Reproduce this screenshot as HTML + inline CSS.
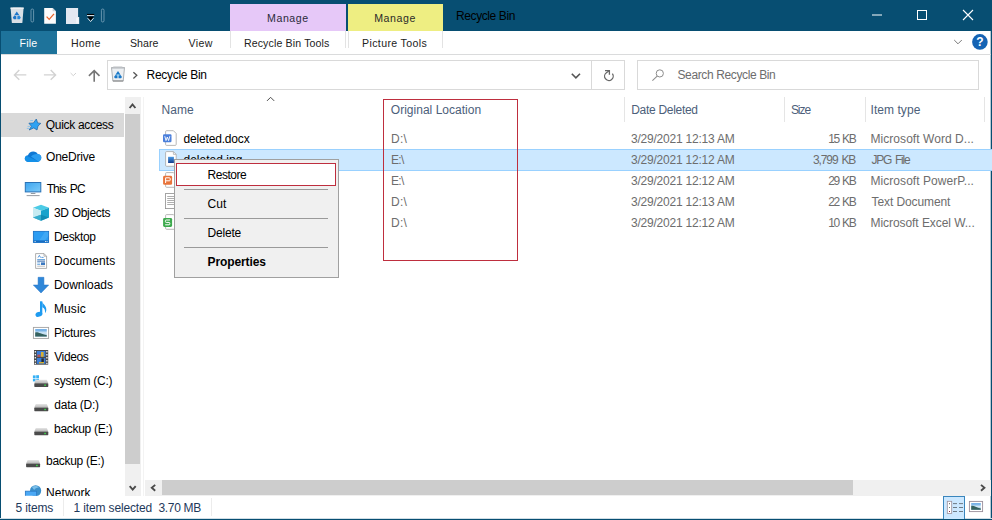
<!DOCTYPE html>
<html lang="en">
<head>
<meta charset="utf-8">
<title>Recycle Bin</title>
<style>
html,body{margin:0;padding:0;}
body{width:992px;height:520px;position:relative;overflow:hidden;background:#fff;font-family:"Liberation Sans",sans-serif;}
.a{position:absolute;}
.t{position:absolute;white-space:pre;line-height:20px;height:20px;}
svg{position:absolute;overflow:visible;}
</style>
</head>
<body>
<!-- title bar -->
<div class="a" style="left:0;top:0;width:992px;height:31px;background:#074e72;"></div>
<!-- window borders -->
<div class="a" style="left:0;top:0;width:1px;height:520px;background:#074e72;"></div>
<div class="a" style="left:990px;top:31px;width:1px;height:489px;background:#b5cad5;"></div>
<div class="a" style="left:991px;top:0;width:1px;height:520px;background:#074e72;"></div>
<div class="a" style="left:0;top:518px;width:992px;height:1px;background:#d0dde5;"></div>
<div class="a" style="left:0;top:519px;width:992px;height:1px;background:#074e72;"></div>
<!-- contextual tabs -->
<div class="a" style="left:230px;top:4px;width:116px;height:27px;background:#e6c8f8;"></div>
<div class="a" style="left:348px;top:4px;width:95px;height:27px;background:#eeee82;"></div>
<!-- file tab -->
<div class="a" style="left:1px;top:31px;width:56px;height:23px;background:#1e739b;"></div>
<!-- ribbon tab separators -->
<div class="a" style="left:230px;top:31px;width:1px;height:17px;background:#e3e3e3;"></div>
<div class="a" style="left:345px;top:31px;width:1px;height:17px;background:#e3e3e3;"></div>
<div class="a" style="left:348px;top:31px;width:1px;height:17px;background:#e3e3e3;"></div>
<div class="a" style="left:442px;top:31px;width:1px;height:17px;background:#e3e3e3;"></div>
<!-- ribbon bottom line -->
<div class="a" style="left:1px;top:54px;width:990px;height:1px;background:#dadbdc;"></div>
<!-- address box -->
<div class="a" style="left:107px;top:60px;width:516px;height:28px;border:1px solid #d9d9d9;box-sizing:content-box;"></div>
<div class="a" style="left:591px;top:61px;width:1px;height:28px;background:#d9d9d9;"></div>
<!-- search box -->
<div class="a" style="left:637px;top:60px;width:340px;height:28px;border:1px solid #d9d9d9;"></div>
<!-- nav pane -->
<div class="a" style="left:1px;top:113px;width:123px;height:24px;background:#d9d9d9;"></div>
<div class="a" style="left:125px;top:97px;width:16px;height:399px;background:#f0f0f0;"></div>
<div class="a" style="left:125px;top:114px;width:15px;height:350px;background:#cdcdcd;"></div>
<div class="a" style="left:143px;top:97px;width:1px;height:399px;background:#f3f3f3;"></div>
<!-- header dividers -->
<div class="a" style="left:624px;top:97px;width:1px;height:25px;background:#e5e5e5;"></div>
<div class="a" style="left:784px;top:97px;width:1px;height:25px;background:#e5e5e5;"></div>
<div class="a" style="left:865px;top:97px;width:1px;height:25px;background:#e5e5e5;"></div>
<div class="a" style="left:984px;top:97px;width:1px;height:25px;background:#e5e5e5;"></div>
<!-- selected row -->
<div class="a" style="left:159px;top:149px;width:832px;height:20px;background:#cce8ff;border-top:1px solid #99d1ff;border-bottom:1px solid #99d1ff;border-left:1px solid #99d1ff;"></div>
<!-- h scrollbar -->
<div class="a" style="left:145px;top:480px;width:846px;height:16px;background:#f0f0f0;"></div>
<div class="a" style="left:162px;top:480px;width:691px;height:15px;background:#cdcdcd;"></div>
<div class="a" style="left:63px;top:498px;width:1px;height:18px;background:#ececec;"></div>
<div class="a" style="left:211px;top:498px;width:1px;height:18px;background:#ececec;"></div>
<!-- status bar view buttons -->
<div class="a" style="left:943px;top:496px;width:20px;height:22px;background:#cce8ff;border:1px solid #3a86bd;border-bottom:none"></div>
<!-- red annotation -->
<div class="a" style="left:383px;top:99px;width:133px;height:160px;border:1px solid #be2e3e;"></div>
<svg width="992" height="520" viewBox="0 0 992 520" style="left:0;top:0">
<defs>
<linearGradient id="gsky" x1="0" y1="0" x2="0" y2="1"><stop offset="0" stop-color="#4a98e0"/><stop offset="0.5" stop-color="#d4e9f7"/><stop offset="1" stop-color="#8db4d2"/></linearGradient>
<linearGradient id="gjpg" x1="0" y1="0" x2="0" y2="1"><stop offset="0" stop-color="#4a9be6"/><stop offset="1" stop-color="#143c8c"/></linearGradient>
<linearGradient id="gdrv" x1="0" y1="0" x2="0" y2="1"><stop offset="0" stop-color="#e6e6e6"/><stop offset="1" stop-color="#b4b4b4"/></linearGradient>
<linearGradient id="gmon" x1="0" y1="0" x2="1" y2="1"><stop offset="0" stop-color="#3da5f0"/><stop offset="1" stop-color="#7ccaf8"/></linearGradient>
<g id="bin">
  <path d="M0.1,1.2 L13.1,1.2 L11.9,15.9 Q11.85,16.4 11.4,16.4 L1.8,16.4 Q1.35,16.4 1.3,15.9 Z" fill="#d9e0e6"/>
  <path d="M0,0.9 L13.2,0.9 L13.1,2.3 L0.1,2.3 Z" fill="#eceff2"/>
  <path d="M2.4,0.4 L10.8,0.4 L10.8,1 L2.4,1 Z" fill="#c9d3db" opacity="0.7"/>
  <path d="M6.3,4.9 L8.9,8.7 L3.7,8.7 Z" fill="#1c74c8"/>
  <path d="M2.3,11 L3.8,8.9 L5.8,9.6 L5.8,12.6 L3.3,12.6 Z" fill="#1c74c8"/>
  <path d="M10.3,11 L8.8,8.9 L6.8,9.6 L6.8,12.6 L9.3,12.6 Z" fill="#2a88d8"/>
</g>
<g id="bin2">
  <path d="M0.3,2 L13.3,2 L12,15.4 L1.7,15.4 Z" fill="#eceff2" stroke="#a4a8ad" stroke-width="0.9" stroke-linejoin="round"/>
  <path d="M0,1.6 L13.6,1.6 L13.5,3 L0.1,3 Z" fill="#b6b9bd"/>
  <path d="M2.2,0.6 L11,0.6 L11.4,1.6 L1.8,1.6 Z" fill="#d2d4d7"/>
  <path d="M1.6,15 L12.1,15 L12,15.9 L1.7,15.9 Z" fill="#858585"/>
  <path d="M6.8,5.4 L9.4,9.2 L4.2,9.2 Z" fill="#1a78c8"/>
  <path d="M2.8,11.4 L4.3,9.3 L6.3,10 L6.3,12.7 L3.8,12.7 Z" fill="#1a78c8"/>
  <path d="M10.8,11.4 L9.3,9.3 L7.3,10 L7.3,12.7 L9.8,12.7 Z" fill="#1a78c8"/>
  <circle cx="6.8" cy="9.6" r="1" fill="#8ccdf2"/>
</g>
<g id="drive">
  <path d="M1.5,0 L12.5,0 L14,3.6 L0,3.6 Z" fill="url(#gdrv)"/>
  <rect x="0" y="3.6" width="14" height="3.6" rx="0.6" fill="#4b4b4b"/>
  <rect x="10" y="4.8" width="1.6" height="1.4" fill="#3ddc4a"/>
</g>
</defs>

<!-- title bar: recycle bin -->
<use href="#bin" x="10.5" y="6.6"/>
<!-- separators -->
<rect x="31" y="9" width="2.6" height="13" rx="1.3" fill="none" stroke="#7ea6bd" stroke-width="0.8"/>
<rect x="101.4" y="9" width="2.6" height="13" rx="1.3" fill="none" stroke="#7ea6bd" stroke-width="0.8"/>
<!-- properties (page with check) -->
<path d="M44.2,8 L52.6,8 L55.9,11.3 L55.9,23.8 L44.2,23.8 Z" fill="#fbfbfb"/>
<path d="M52.6,8 L52.6,11.3 L55.9,11.3 Z" fill="#c9ced6"/>
<path d="M46.6,16.6 L49.2,19.4 L54,13.8" fill="none" stroke="#e8632a" stroke-width="1.25"/>
<!-- new folder (blank page) -->
<path d="M66,7.9 L78.1,7.9 L78.1,17 L79.2,17 L79.2,23.9 L66,23.9 Z" fill="#e3e8f1"/>
<path d="M76.2,17.6 L78.6,17.6 L78.6,23.4 L76.2,23.4 Z" fill="#f3f6fa"/>
<!-- customize dropdown -->
<rect x="87" y="13.9" width="7.2" height="1.2" fill="#000"/>
<rect x="87" y="15.1" width="7.2" height="1" fill="#e8eef2"/>
<path d="M87.2,16.6 L94,16.6 L90.6,20.4 Z" fill="#000"/>
<path d="M87.6,18.2 L90.6,21.6 L93.6,18.2" fill="none" stroke="#e8eef2" stroke-width="0.9"/>
<!-- window controls -->
<rect x="872" y="14.5" width="10" height="1" fill="#fff"/>
<rect x="917.5" y="10.5" width="9" height="9" fill="none" stroke="#fff" stroke-width="1"/>
<path d="M963,10 L973,20 M973,10 L963,20" stroke="#fff" stroke-width="1.1" fill="none"/>
<!-- ribbon collapse chevron + help -->
<path d="M954.2,40 L958,43.8 L961.8,40" fill="none" stroke="#7a7a7a" stroke-width="1"/>
<circle cx="979.9" cy="41.9" r="7.8" fill="#1463b4"/>
<text x="979.9" y="46.3" font-family="Liberation Sans, sans-serif" font-size="12" font-weight="700" fill="#fff" text-anchor="middle">?</text>

<!-- nav arrows -->
<path d="M26.3,74.9 L14.4,74.9 M19.3,70 L14.4,74.9 L19.3,79.8" fill="none" stroke="#d2d2d2" stroke-width="1.4"/>
<path d="M43.9,74.9 L55.6,74.9 M50.7,70 L55.6,74.9 L50.7,79.8" fill="none" stroke="#d2d2d2" stroke-width="1.4"/>
<path d="M70.6,73 L73.3,75.7 L76,73" fill="none" stroke="#d2d2d2" stroke-width="1"/>
<path d="M94.2,81.7 L94.2,70.6 M88.9,75.9 L94.2,70.6 L99.5,75.9" fill="none" stroke="#767676" stroke-width="1.6"/>
<!-- address recycle bin -->
<use href="#bin2" x="111.2" y="65.6"/>
<path d="M133.4,72.2 L136.8,75.3 L133.4,78.4" fill="none" stroke="#555" stroke-width="1.3"/>
<!-- address dropdown chevron -->
<path d="M571.8,73.8 L575.9,77.9 L580,73.8" fill="none" stroke="#555" stroke-width="1.6"/>
<!-- refresh -->
<path d="M612.4,73.7 A4.3,4.3 0 1 1 606.4,72.7 L608.8,71" fill="none" stroke="#666" stroke-width="1.3"/>
<path d="M605,70.7 L609.4,70.7 L609.4,74.8" fill="none" stroke="#666" stroke-width="1.3"/>
<!-- search magnifier -->
<circle cx="659.8" cy="73.4" r="3.6" fill="none" stroke="#8c8c8c" stroke-width="1"/>
<path d="M657.2,76.2 L652.4,80.6" stroke="#8c8c8c" stroke-width="1.1"/>

<!-- nav scrollbar arrows -->
<path d="M129.6,108 L132.5,104.5 L135.4,108" fill="none" stroke="#4a4a4a" stroke-width="1.9"/>
<path d="M129.7,486.2 L132.7,489.6 L135.7,486.2" fill="none" stroke="#4a4a4a" stroke-width="1.9"/>
<!-- h scrollbar arrows -->
<path d="M155.2,484.9 L151.8,487.8 L155.2,490.7" fill="none" stroke="#4a4a4a" stroke-width="1.9"/>
<path d="M981,484.9 L984.4,487.8 L981,490.7" fill="none" stroke="#4a4a4a" stroke-width="1.9"/>
<!-- sort arrow -->
<path d="M267,100.9 L270.6,97.3 L274.2,100.9" fill="none" stroke="#4a4a4a" stroke-width="1"/>

<!-- quick access star -->
<path d="M36.3,119 L37.7,122.9 L40.8,123.4 L38,126 L37,130 L33.8,127.9 L29.2,130 L31.4,126.2 L28.9,123.2 L33.4,123 Z" fill="#2ea2f2" stroke="#1c64a6" stroke-width="0.7" stroke-linejoin="round"/>
<path d="M30.2,120.6 L33,120.6 M27.6,126.4 L30,126.4 M26.8,128.4 L29,128.4" stroke="#5ab4f5" stroke-width="0.6"/>
<!-- onedrive cloud -->
<path d="M28.4,161.9 C25.6,161.9 24.8,159.6 24.8,158.6 C24.8,156.6 26.4,155.4 28,155.3 C28.6,153 30.8,151.5 33.2,151.5 C35.4,151.5 37,152.6 37.8,154.2 C39.8,154 41.3,155.6 41.3,157.6 C41.3,160 39.6,161.9 37.6,161.9 Z" fill="#0f78d4"/>
<path d="M28.4,161.9 C25.6,161.9 24.8,159.6 24.8,158.6 C24.8,157.2 25.6,156.2 26.6,155.7 L38.6,161.7 C38.2,161.9 37.9,161.9 37.6,161.9 Z" fill="#1490e8"/>
<path d="M31,156.6 C32.4,154.8 35.6,153.6 37.8,154.2 C39.8,154 41.3,155.6 41.3,157.6 C41.3,159.6 40.2,161.2 38.6,161.7 Z" fill="#2b9df0"/>
<!-- this pc -->
<rect x="25.3" y="182.5" width="15.5" height="9.4" fill="url(#gmon)" stroke="#2a72b6" stroke-width="1"/>
<rect x="30.8" y="193" width="4.6" height="0.9" fill="#8a9098"/>
<rect x="26.6" y="195.2" width="13" height="0.9" fill="#8a9098"/>
<!-- 3d objects -->
<path d="M41,204.8 L49,207.8 L41,210.8 L33,207.8 Z" fill="#4ccbe6"/>
<path d="M33,207.8 L41,210.8 L41,220.7 L33,217.6 Z" fill="#c6ebf2"/>
<path d="M49,207.8 L49,217.6 L41,220.7 L41,210.8 Z" fill="#19a3cc"/>
<path d="M33,217.6 L41,214.8 L49,217.6 L41,220.7 Z" fill="#0f86ae" opacity="0.8"/>
<path d="M33,217.6 L41,214.8 L41,220.7 Z" fill="#35b5d6" opacity="0.7"/>
<!-- desktop -->
<rect x="33.4" y="231.4" width="15.2" height="11" fill="#2b9cf2" stroke="#1b74c8" stroke-width="0.9"/>
<path d="M39,241 L45,231.8 L48.2,231.8 L48.2,236 L44.6,241 Z" fill="#49aef6" opacity="0.7"/>
<rect x="33.4" y="240.4" width="15.2" height="2" fill="#176cc0"/>
<rect x="34.6" y="241" width="1" height="0.9" fill="#fff"/><rect x="45" y="241" width="0.9" height="0.9" fill="#fff"/><rect x="46.6" y="241" width="0.9" height="0.9" fill="#fff"/>
<!-- documents -->
<path d="M35.6,253.6 L44,253.6 L46.6,256.2 L46.6,268.4 L35.6,268.4 Z" fill="#fff" stroke="#9b9b9b" stroke-width="0.8"/>
<path d="M44,253.6 L44,256.2 L46.6,256.2" fill="none" stroke="#9b9b9b" stroke-width="0.7"/>
<path d="M38,257.6 L39.4,255.4 L40.6,257.6 M41.4,257.4 L43.6,257.4" stroke="#2f7fd0" stroke-width="0.8" fill="none"/>
<rect x="37.2" y="259" width="7.8" height="0.8" fill="#4c94d8"/>
<rect x="37.2" y="260.6" width="7.8" height="1" fill="#2b62a8"/>
<rect x="37.2" y="262.6" width="3" height="0.7" fill="#4c94d8"/><rect x="37.2" y="264" width="3" height="0.7" fill="#4c94d8"/>
<rect x="41" y="262.4" width="4" height="2.6" fill="#3b78c0"/>
<rect x="37.2" y="265.8" width="7.8" height="0.7" fill="#a5a5a5"/>
<!-- downloads -->
<path d="M38.1,277.3 L43.9,277.3 L43.9,285 L48.7,285 L41,293 L33.3,285 L38.1,285 Z" fill="#2f87d8" stroke="#2272c6" stroke-width="0.5"/>
<!-- music -->
<ellipse cx="38.9" cy="314.3" rx="3.5" ry="2.4" fill="#1e9bf0" transform="rotate(-18 38.9 314.3)"/>
<path d="M40,301.3 L42.3,301.3 L42.3,314.3 L40,314.3 Z" fill="#1e9bf0"/>
<path d="M42.3,301.6 C42.8,304.6 46.4,305.6 46.3,309.4 C46.3,311 45.8,312.2 45,313 C45.4,310 44.4,308 42.3,307.2 Z" fill="#1e9bf0"/>
<!-- pictures -->
<rect x="33.4" y="327.4" width="15.2" height="11" fill="#fff" stroke="#a2a2a2" stroke-width="0.9"/>
<rect x="35.2" y="329.2" width="11.6" height="7.4" fill="url(#gsky)"/>
<path d="M35.2,332.6 C37.6,331.6 40.6,334 46.8,335.2 L46.8,336.6 L35.2,336.6 Z" fill="#35625f"/>
<!-- videos -->
<rect x="34" y="350" width="14.2" height="14.7" fill="#4a4a4a"/>
<rect x="36.8" y="351" width="8.6" height="5.8" fill="#3b7dd8"/>
<rect x="36.8" y="358" width="8.6" height="5.8" fill="#3b7dd8"/>
<rect x="41" y="352" width="2.6" height="4.8" fill="#d8b030"/><rect x="41.4" y="358.4" width="2.4" height="4" fill="#2a2a2a"/>
<rect x="37.4" y="354.6" width="3" height="2.2" fill="#c0504a"/><rect x="39" y="362" width="5" height="1.4" fill="#d8b030"/>
<g fill="#fff"><rect x="34.7" y="351" width="1.2" height="1.5"/><rect x="34.7" y="354" width="1.2" height="1.5"/><rect x="34.7" y="357" width="1.2" height="1.5"/><rect x="34.7" y="360" width="1.2" height="1.5"/><rect x="34.7" y="362.8" width="1.2" height="1.3"/>
<rect x="46.3" y="351" width="1.2" height="1.5"/><rect x="46.3" y="354" width="1.2" height="1.5"/><rect x="46.3" y="357" width="1.2" height="1.5"/><rect x="46.3" y="360" width="1.2" height="1.5"/><rect x="46.3" y="362.8" width="1.2" height="1.3"/></g>
<!-- system drive -->
<g fill="#35b0f5"><rect x="32.9" y="375.4" width="2.7" height="2.7"/><rect x="36.2" y="375.2" width="2.8" height="2.9"/><rect x="32.9" y="378.7" width="2.7" height="2.7"/><rect x="36.2" y="378.7" width="2.8" height="2.9"/></g>
<use href="#drive" x="34.3" y="379.7"/>
<use href="#drive" x="34.3" y="404"/>
<use href="#drive" x="34.3" y="428"/>
<use href="#drive" x="26.1" y="460"/>
<!-- network (clipped by status bar) -->
<clipPath id="cnav"><rect x="0" y="470" width="125" height="25.8"/></clipPath>
<g clip-path="url(#cnav)">
<circle cx="35.6" cy="490.8" r="5.6" fill="#3a8fcb"/>
<path d="M32,487 C34,485.6 37,485.6 39,487.4 C37,487.2 35,488.4 34.2,490 C33.4,489 32.4,488 32,487 Z" fill="#8ccaf0" opacity="0.8"/>
<rect x="25.4" y="491.2" width="11.2" height="6" fill="#4aa8f5" stroke="#2c7cc8" stroke-width="0.9"/>
</g>

<!-- file icons -->
<g id="pg1">
<path d="M166.6,130.7 L173.4,130.7 L176.2,133.5 L176.2,144.4 Q176.2,145.4 175.2,145.4 L166.6,145.4 Q165.6,145.4 165.6,144.4 L165.6,131.7 Q165.6,130.7 166.6,130.7 Z" fill="#fff" stroke="#a6a6a6" stroke-width="0.8"/>
</g>
<rect x="163" y="134.2" width="8.5" height="8.1" rx="1.2" fill="#4a7fdb"/>
<path d="M164.8,136.2 L166,140.6 L167.3,137 L168.6,140.6 L169.8,136.2" fill="none" stroke="#fff" stroke-width="0.9"/>
<!-- jpg -->
<path d="M166.6,151.6 L173.4,151.6 L176.2,154.4 L176.2,165.3 Q176.2,166.3 175.2,166.3 L166.6,166.3 Q165.6,166.3 165.6,165.3 L165.6,152.6 Q165.6,151.6 166.6,151.6 Z" fill="#fff" stroke="#a6a6a6" stroke-width="0.8"/>
<path d="M173.4,151.6 L173.4,154.4 L176.2,154.4" fill="none" stroke="#a6a6a6" stroke-width="0.7"/>
<rect x="168.1" y="156.8" width="5.8" height="6.2" fill="url(#gjpg)"/>
<!-- pptx -->
<path d="M166.6,172.6 L173.4,172.6 L176.2,175.4 L176.2,186.3 Q176.2,187.3 175.2,187.3 L166.6,187.3 Q165.6,187.3 165.6,186.3 L165.6,173.6 Q165.6,172.6 166.6,172.6 Z" fill="#fff" stroke="#a6a6a6" stroke-width="0.8"/>
<rect x="163.1" y="175.8" width="9" height="9" rx="1.4" fill="#e8743b"/>
<path d="M165.6,183 L165.6,177.8 L169.4,177.8 Q170.2,177.8 170.2,178.8 L170.2,180 Q170.2,180.8 169.4,180.8 L165.6,180.8" fill="none" stroke="#fff" stroke-width="1"/>
<!-- txt -->
<rect x="165.4" y="193.6" width="10.8" height="15" fill="#fff" stroke="#8e8e8e" stroke-width="0.8"/>
<g fill="#9a9a9a"><rect x="167.2" y="196" width="7.2" height="0.8"/><rect x="167.2" y="198" width="7.2" height="0.8"/><rect x="167.2" y="200" width="7.2" height="0.8"/><rect x="167.2" y="202" width="7.2" height="0.8"/><rect x="167.2" y="204" width="7.2" height="0.8"/></g>
<!-- xlsx -->
<path d="M166.6,214.6 L173.4,214.6 L176.2,217.4 L176.2,228.3 Q176.2,229.3 175.2,229.3 L166.6,229.3 Q165.6,229.3 165.6,228.3 L165.6,215.6 Q165.6,214.6 166.6,214.6 Z" fill="#fff" stroke="#a6a6a6" stroke-width="0.8"/>
<rect x="163.1" y="217.9" width="9" height="9" rx="1.4" fill="#3daa4d"/>
<path d="M170,220 L166.2,220 Q165.4,220 165.4,220.8 L165.4,221.6 Q165.4,222.4 166.2,222.4 L169,222.4 Q169.8,222.4 169.8,223.2 L169.8,224 Q169.8,224.8 169,224.8 L165.2,224.8" fill="none" stroke="#fff" stroke-width="1"/>

<!-- status bar view icons -->
<rect x="947.3" y="501.3" width="4.4" height="12.2" fill="#fff" stroke="#9a8f9a" stroke-width="0.8"/>
<rect x="949" y="503.2" width="1" height="1" fill="#555"/><rect x="949" y="507" width="1" height="1" fill="#6a8a7a"/><rect x="949" y="511" width="1" height="1" fill="#8a2040"/>
<g fill="#6e7b85"><rect x="953" y="503.1" width="4" height="1"/><rect x="959" y="503.1" width="4" height="1"/><rect x="953" y="507" width="4" height="1"/><rect x="959" y="507" width="4" height="1"/><rect x="953" y="511" width="4" height="1"/><rect x="959" y="511" width="4" height="1"/></g>
<rect x="969.4" y="501.4" width="13.2" height="10.2" fill="#fff" stroke="#9a8f9a" stroke-width="0.9"/>
<rect x="971.2" y="503.2" width="9.6" height="6.6" fill="url(#gsky)"/>
<path d="M971.2,505.8 C973.4,505 976,507.2 980.8,508.6 L980.8,509.8 L971.2,509.8 Z" fill="#35625f"/>
</svg>

<div class="a" style="left:0;top:90px;width:125px;height:406px;overflow:hidden;"><div class="a" style="left:0;top:-90px;width:125px;height:520px;">
<span class="t" style="left:45.8px;top:115px;font-size:12px;color:#000;letter-spacing:-0.31px;">Quick access</span>
<span class="t" style="left:46.0px;top:147px;font-size:12px;color:#000;letter-spacing:-0.2px;">OneDrive</span>
<span class="t" style="left:46.7px;top:179px;font-size:12px;color:#000;letter-spacing:-0.9px;word-spacing:1.6px;">This PC</span>
<span class="t" style="left:54.0px;top:203px;font-size:12px;color:#000;letter-spacing:-0.32px;">3D Objects</span>
<span class="t" style="left:54.0px;top:227px;font-size:12px;color:#000;letter-spacing:-0.35px;">Desktop</span>
<span class="t" style="left:54.0px;top:251px;font-size:12px;color:#000;letter-spacing:0.07px;">Documents</span>
<span class="t" style="left:54.0px;top:275px;font-size:12px;color:#000;letter-spacing:-0.05px;">Downloads</span>
<span class="t" style="left:54.0px;top:299px;font-size:12px;color:#000;letter-spacing:0.09px;">Music</span>
<span class="t" style="left:54.0px;top:323px;font-size:12px;color:#000;letter-spacing:-0.24px;">Pictures</span>
<span class="t" style="left:54.2px;top:347px;font-size:12px;color:#000;letter-spacing:-0.37px;">Videos</span>
<span class="t" style="left:54.0px;top:371px;font-size:12px;color:#000;letter-spacing:-0.29px;">system (C:)</span>
<span class="t" style="left:54.3px;top:395px;font-size:12px;color:#000;letter-spacing:-0.24px;">data (D:)</span>
<span class="t" style="left:54.0px;top:419px;font-size:12px;color:#000;letter-spacing:-0.29px;">backup (E:)</span>
<span class="t" style="left:46.0px;top:451px;font-size:12px;color:#000;letter-spacing:-0.29px;">backup (E:)</span>
<span class="t" style="left:46.0px;top:483px;font-size:12px;color:#000;letter-spacing:0.1px;">Network</span>
</div></div>
<span class="t" style="left:183.5px;top:150px;font-size:12px;color:#000;letter-spacing:0.01px;">deleted.jpg</span>
<!-- context menu -->
<div class="a" style="left:174px;top:159px;width:163px;height:117px;background:#f0f0f0;border:1px solid #a0a0a0;"></div>
<div class="a" style="left:176px;top:163px;width:158px;height:21px;background:#fff;border:1px solid #be2e3e;"></div>
<div class="a" style="left:184px;top:189px;width:144px;height:1px;background:#9a9a9a;"></div>
<div class="a" style="left:184px;top:218px;width:144px;height:1px;background:#9a9a9a;"></div>
<div class="a" style="left:184px;top:247px;width:144px;height:1px;background:#9a9a9a;"></div>
<span class="t" style="left:267.0px;top:8px;font-size:10.6px;color:#2b2b3a;letter-spacing:0.58px;">Manage</span>
<span class="t" style="left:374.2px;top:8px;font-size:10.6px;color:#2b2b2b;letter-spacing:0.6px;">Manage</span>
<span class="t" style="left:456.0px;top:6px;font-size:12px;color:#000;letter-spacing:-0.4px;">Recycle Bin</span>
<span class="t" style="left:19.5px;top:33px;font-size:10.6px;color:#fff;letter-spacing:0.2px;">File</span>
<span class="t" style="left:71.0px;top:33px;font-size:10.6px;color:#222;letter-spacing:0.37px;">Home</span>
<span class="t" style="left:130.0px;top:33px;font-size:10.6px;color:#222;letter-spacing:0.02px;">Share</span>
<span class="t" style="left:188.5px;top:33px;font-size:10.6px;color:#222;letter-spacing:0.37px;">View</span>
<span class="t" style="left:243.9px;top:33px;font-size:10.6px;color:#222;letter-spacing:0.13px;">Recycle Bin Tools</span>
<span class="t" style="left:362.1px;top:33px;font-size:10.6px;color:#222;letter-spacing:0.35px;">Picture Tools</span>
<span class="t" style="left:146.5px;top:65px;font-size:12px;color:#000;letter-spacing:-0.29px;">Recycle Bin</span>
<span class="t" style="left:677.5px;top:65px;font-size:12px;color:#6d6d6d;letter-spacing:-0.38px;">Search Recycle Bin</span>
<span class="t" style="left:161.5px;top:100px;font-size:12px;color:#4c607a;letter-spacing:0.03px;">Name</span>
<span class="t" style="left:390.8px;top:100px;font-size:12px;color:#4c607a;letter-spacing:0.02px;">Original Location</span>
<span class="t" style="left:631.2px;top:100px;font-size:12px;color:#4c607a;letter-spacing:-0.29px;">Date Deleted</span>
<span class="t" style="left:790.9px;top:100px;font-size:12px;color:#4c607a;letter-spacing:-1.03px;">Size</span>
<span class="t" style="left:870.5px;top:100px;font-size:12px;color:#4c607a;letter-spacing:0.06px;">Item type</span>
<span class="t" style="left:183.5px;top:129px;font-size:12px;color:#000;letter-spacing:-0.17px;">deleted.docx</span>
<span class="t" style="left:391.0px;top:129px;font-size:12px;color:#6d6d6d;letter-spacing:0.3px;">D:\</span>
<span class="t" style="left:631.0px;top:129px;font-size:12px;color:#6d6d6d;letter-spacing:-0.22px;">3/29/2021 12:13 AM</span>
<span class="t" style="left:828.2px;top:129px;font-size:12px;color:#6d6d6d;letter-spacing:-1.45px;word-spacing:1.6px;">15 KB</span>
<span class="t" style="left:870.5px;top:129px;font-size:12px;color:#6d6d6d;letter-spacing:0.05px;">Microsoft Word D...</span>
<span class="t" style="left:391.0px;top:150px;font-size:12px;color:#6d6d6d;letter-spacing:-0.7px;">E:\</span>
<span class="t" style="left:631.0px;top:150px;font-size:12px;color:#6d6d6d;letter-spacing:-0.22px;">3/29/2021 12:12 AM</span>
<span class="t" style="left:812.9px;top:150px;font-size:12px;color:#6d6d6d;letter-spacing:-1.07px;word-spacing:1.6px;">3,799 KB</span>
<span class="t" style="left:871.5px;top:150px;font-size:12px;color:#6d6d6d;letter-spacing:-1.21px;word-spacing:1.6px;">JPG File</span>
<span class="t" style="left:391.0px;top:171px;font-size:12px;color:#6d6d6d;letter-spacing:-0.7px;">E:\</span>
<span class="t" style="left:631.0px;top:171px;font-size:12px;color:#6d6d6d;letter-spacing:-0.22px;">3/29/2021 12:12 AM</span>
<span class="t" style="left:828.2px;top:171px;font-size:12px;color:#6d6d6d;letter-spacing:-1.45px;word-spacing:1.6px;">29 KB</span>
<span class="t" style="left:870.5px;top:171px;font-size:12px;color:#6d6d6d;letter-spacing:0.05px;">Microsoft PowerP...</span>
<span class="t" style="left:391.0px;top:192px;font-size:12px;color:#6d6d6d;letter-spacing:0.3px;">D:\</span>
<span class="t" style="left:631.0px;top:192px;font-size:12px;color:#6d6d6d;letter-spacing:-0.22px;">3/29/2021 12:13 AM</span>
<span class="t" style="left:828.2px;top:192px;font-size:12px;color:#6d6d6d;letter-spacing:-1.45px;word-spacing:1.6px;">22 KB</span>
<span class="t" style="left:871.5px;top:192px;font-size:12px;color:#6d6d6d;letter-spacing:-0.09px;">Text Document</span>
<span class="t" style="left:391.0px;top:213px;font-size:12px;color:#6d6d6d;letter-spacing:0.3px;">D:\</span>
<span class="t" style="left:631.0px;top:213px;font-size:12px;color:#6d6d6d;letter-spacing:-0.22px;">3/29/2021 12:12 AM</span>
<span class="t" style="left:828.2px;top:213px;font-size:12px;color:#6d6d6d;letter-spacing:-1.45px;word-spacing:1.6px;">10 KB</span>
<span class="t" style="left:870.5px;top:213px;font-size:12px;color:#6d6d6d;letter-spacing:-0.06px;">Microsoft Excel W...</span>
<span class="t" style="left:207.5px;top:165px;font-size:12px;color:#000;letter-spacing:-0.48px;">Restore</span>
<span class="t" style="left:207.5px;top:194px;font-size:12px;color:#000;letter-spacing:0.05px;">Cut</span>
<span class="t" style="left:207.5px;top:223px;font-size:12px;color:#000;letter-spacing:-0.18px;">Delete</span>
<span class="t" style="left:207.5px;top:252px;font-size:12px;color:#000;letter-spacing:-0.1px;font-weight:700;">Properties</span>
<span class="t" style="left:15.5px;top:498px;font-size:12px;color:#1e395b;letter-spacing:-0.15px;">5 items</span>
<span class="t" style="left:73.5px;top:498px;font-size:12px;color:#1e395b;letter-spacing:-0.14px;">1 item selected</span>
<span class="t" style="left:158.5px;top:498px;font-size:12px;color:#1e395b;letter-spacing:-0.32px;">3.70 MB</span>
</body>
</html>
